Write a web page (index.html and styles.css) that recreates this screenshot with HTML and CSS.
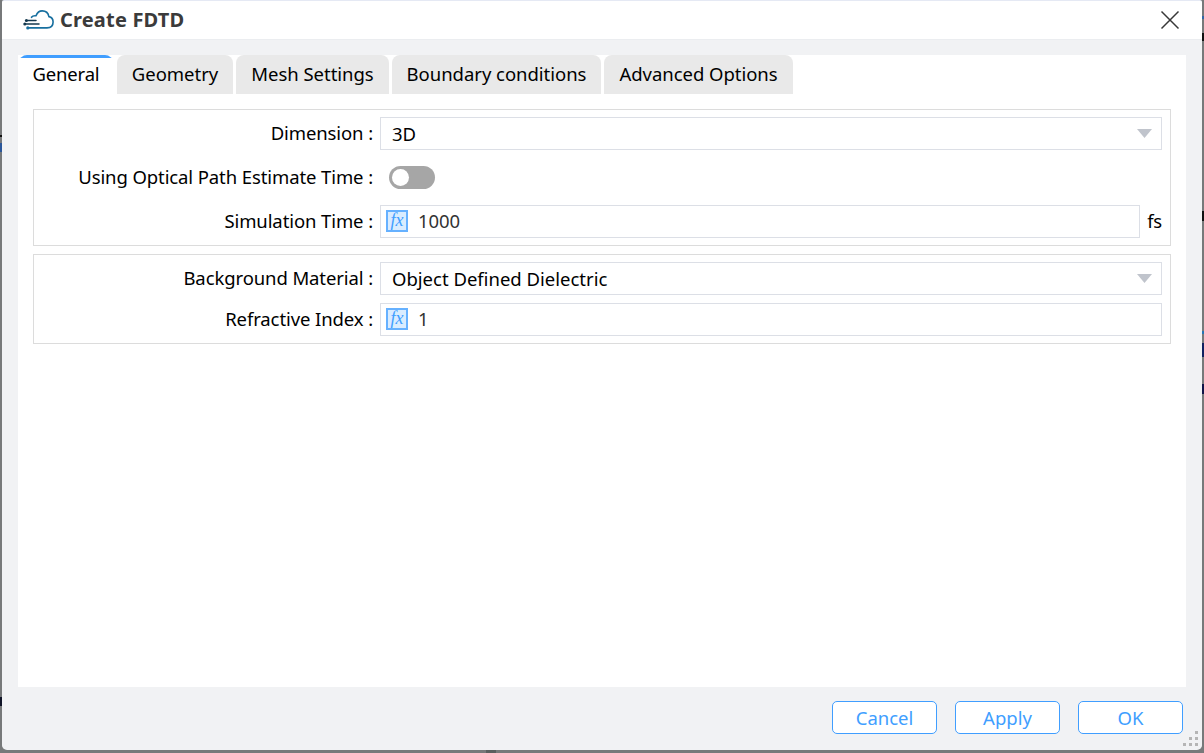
FILE: index.html
```html
<!DOCTYPE html>
<html lang="en">
<head>
<meta charset="utf-8">
<title>Create FDTD</title>
<link rel="stylesheet" href="styles.css">
</head>
<body>
<i class="speck s1"></i><i class="speck s2"></i><i class="speck s3"></i><i class="speck s4"></i><i class="speck s5"></i><i class="speck s6"></i><i class="speck s7"></i><i class="speck s8"></i><i class="speck s9"></i><i class="speck s10"></i>
<main class="dialog">
  <header class="titlebar">
    <svg class="logo" width="32" height="22" viewBox="0 0 32 22" fill="none" stroke-linecap="round" stroke-linejoin="round">
      <path d="M8.5 8.3C9.5 6.8 11 6.5 13 6.8C14.3 3.5 16.5 1.9 19.2 1.9C22.8 1.9 25.2 4.1 25.9 7.6C28.7 8.2 30.1 10.2 30.1 13C30.1 16.8 27.7 18.9 24 18.9H5" stroke="#176f9f" stroke-width="1.6"/>
      <path d="M3 11.4H13M1.5 15H16" stroke="#14384e" stroke-width="1.5"/>
      <circle cx="3.4" cy="11.4" r="1.5" fill="#14384e"/><circle cx="1.8" cy="15" r="1.5" fill="#14384e"/><circle cx="4.8" cy="18.9" r="1.6" fill="#176f9f"/>
    </svg>
    <h1 class="title">Create FDTD</h1>
    <svg class="close" width="20" height="20" viewBox="0 0 20 20" stroke="#383838" stroke-width="1.5"><path d="M1.5 1.5L18.5 18.5M18.5 1.5L1.5 18.5"/></svg>
  </header>
  <section class="panel">
    <nav class="tabs">
      <span class="tab active"><b class="txt t-general">General</b></span>
      <span class="tab geometry"><b class="txt">Geometry</b></span>
      <span class="tab mesh"><b class="txt">Mesh Settings</b></span>
      <span class="tab boundary"><b class="txt">Boundary conditions</b></span>
      <span class="tab advanced"><b class="txt">Advanced Options</b></span>
    </nav>
    <div class="group simulation">
      <div class="row"><label class="label"><b class="txt">Dimension :</b></label><div class="field select"><b class="txt">3D</b><svg class="arrow" width="15" height="9"><path d="M0 0H15L7.5 9Z" fill="#c0c4cc"/></svg></div></div>
      <div class="row"><label class="label"><b class="txt">Using Optical Path Estimate Time :</b></label><span class="toggle"><i class="knob"></i></span></div>
      <div class="row"><label class="label"><b class="txt">Simulation Time :</b></label><div class="field"><span class="fx">fx</span><b class="txt value">1000</b></div><b class="txt unit">fs</b></div>
    </div>
    <div class="group material">
      <div class="row"><label class="label"><b class="txt">Background Material :</b></label><div class="field select"><b class="txt">Object Defined Dielectric</b><svg class="arrow" width="15" height="9"><path d="M0 0H15L7.5 9Z" fill="#c0c4cc"/></svg></div></div>
      <div class="row"><label class="label"><b class="txt">Refractive Index :</b></label><div class="field"><span class="fx">fx</span><b class="txt value">1</b></div></div>
    </div>
  </section>
  <footer class="actions">
    <button class="btn">Cancel</button><button class="btn">Apply</button><button class="btn">OK</button>
  </footer>
  <svg class="grip" width="16" height="16" fill="#b5b5b5"><path d="M12 0h3v3h-3zM6 6h3v3h-3zM12 6h3v3h-3zM0 12h3v3h-3zM6 12h3v3h-3zM12 12h3v3h-3z"/></svg>
</main>
</body>
</html>
```
FILE: styles.css
```css
* { box-sizing: border-box; }
body { margin: 0; height: 753px; padding: 1px 2px 3px 2px; overflow: hidden; background: #77797a; font: 18.5px/24px "Noto Sans", "Open Sans", sans-serif; color: #000; position: relative; }
.dialog { position: relative; width: 1200px; height: 749px; background: #f1f2f4; border-radius: 2px 2px 5px 5px; overflow: hidden; box-shadow: 0 -1px #e5e9f4; }
.titlebar { height: 39px; background: #fff; border-bottom: 1px solid #ebedf0; display: flex; align-items: center; padding: 0 22px 0 20px; }
.logo { margin: 0 5px 0 1px; }
.title { margin: 0; flex: 1; font-size: 20px; line-height: 26px; font-weight: 700; color: #3b3b3b; letter-spacing: .18px; }
.close { margin-top: -1px; }
.panel { margin: 15px 16px 0; height: 632px; background: #fff; }
.txt { font-weight: 400; white-space: nowrap; }
.tabs { display: flex; height: 39px; padding-left: 1px; }
.tab { height: 39px; border-radius: 8px 8px 0 0; background: #e9e9e9; display: flex; align-items: center; justify-content: center; margin-right: 3px; padding-bottom: 2px; letter-spacing: -.03px; }
.active { width: 94px; margin-right: 4px; background: linear-gradient(#409eff 3px, #fff 3px); }
.t-general { letter-spacing: -.2px; }
.geometry { width: 116px; }
.mesh { width: 153px; }
.boundary { width: 209px; }
.advanced { width: 189px; }
.group { margin: 0 15px; border: 1px solid #dcdcdc; padding: 7px 8px; display: flex; flex-direction: column; }
.simulation { margin-top: 15px; height: 137px; gap: 11px; }
.material { margin-top: 8px; height: 90px; gap: 8px; }
.row { display: flex; height: 33px; align-items: center; }
.label { width: 331px; text-align: right; margin-right: 7px; padding-bottom: 2px; letter-spacing: -.1px; }
.field { flex: 1; height: 33px; border: 1px solid #dcdfe6; display: flex; align-items: center; padding: 0 5px; }
.select { padding: 0 9px 0 11px; justify-content: space-between; }
.toggle { width: 46px; height: 23px; margin-left: 9px; border-radius: 12px; background: #a6a6a6; padding: 3px; }
.knob { display: block; width: 17px; height: 17px; border-radius: 50%; background: #fff; }
.fx { width: 22px; height: 22px; margin-top: -1px; border: 2px solid #66b1ff; background: #d9ecff; color: #409eff; font: italic 18px/17px "Liberation Serif", serif; text-align: center; }
.value { color: #333; margin-left: 10px; padding-bottom: 2px; letter-spacing: -.1px; }
.unit { width: 22px; text-align: right; padding-bottom: 2px; letter-spacing: -.2px; }
.actions { display: flex; justify-content: flex-end; gap: 18px; padding: 14px 19px 0 0; }
.btn { width: 105px; height: 33px; padding: 0; border: 1px solid #409eff; border-radius: 5px; background: #fff; color: #409eff; font: inherit; }
.grip { position: absolute; right: 3px; bottom: 3px; }
.speck { position: absolute; width: 2px; background: #111; }
.s1 { left: 0; top: 135px; height: 2px; }
.s2 { left: 0; top: 143px; height: 9px; background: #2b579a; }
.s3 { left: 0; top: 697px; height: 9px; background: #101427; }
.s4 { right: 0; top: 16px; height: 3px; background: #3465a4; }
.s5 { right: 0; top: 33px; height: 8px; }
.s6 { right: 0; top: 211px; height: 10px; }
.s7 { right: 0; top: 331px; height: 3px; background: #2675b4; }
.s8 { right: 0; top: 343px; height: 14px; background: #102060; }
.s9 { right: 0; top: 384px; height: 10px; background: #101448; }
.s10 { left: 486px; top: 750px; width: 10px; height: 3px; background: #5a5f5f; }
```
